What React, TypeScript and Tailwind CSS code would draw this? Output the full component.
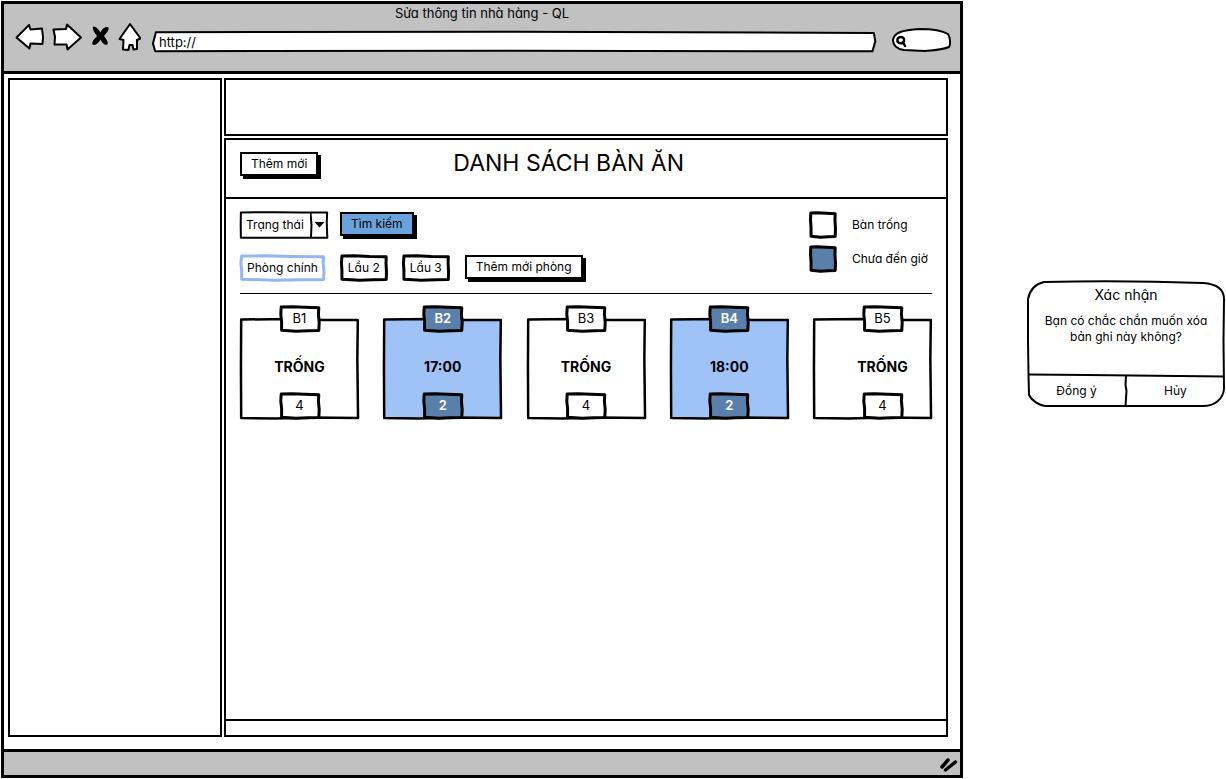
import type { ReactNode } from "react";
import clsx from "clsx";

type Table = { name: string; label: string; seats: number; reserved: boolean };

const tables: Table[] = [
  { name: "B1", label: "TRỐNG", seats: 4, reserved: false },
  { name: "B2", label: "17:00", seats: 2, reserved: true },
  { name: "B3", label: "TRỐNG", seats: 4, reserved: false },
  { name: "B4", label: "18:00", seats: 2, reserved: true },
  { name: "B5", label: "TRỐNG", seats: 4, reserved: false },
];

const wobbly =
  "M3 4 L30 3 L62 5 L97 7 L96 30 L98 64 L97 94 L70 95 L40 97 L4 93 L4 60 L2 32 Z";
const wobblyWide =
  "M2 4 L30 3 L62 6 L98.500 7 L98 30 L99 64 L98.500 94 L70 95 L40 97 L2 93 L2 60 L1 32 Z";
const straight = "M1 1.500 L40 1 L70 2 L99 2 L98.600 40 L99.200 99 L60 98.600 L30 99.400 L1 99 L0.800 50 Z";

/* Hand-drawn outline that stretches with the box it sits in. */
function Sketch({ d, className }: { d: string; className: string }) {
  return (
    <svg
      className={clsx("absolute inset-0 h-full w-full overflow-visible", className)}
      viewBox="0 0 100 100"
      preserveAspectRatio="none"
      aria-hidden="true"
    >
      <path d={d} vectorEffect="non-scaling-stroke" strokeLinejoin="round" />
    </svg>
  );
}

function Badge({ dark, children }: { dark: boolean; children: ReactNode }) {
  return (
    <span
      className={clsx(
        "relative flex h-[26px] w-10 items-center justify-center text-[13px]",
        dark ? "font-semibold text-white" : "text-black",
      )}
    >
      <Sketch
        d={wobbly}
        className={clsx("stroke-black stroke-[3px]", dark ? "fill-[#5b7fab]" : "fill-white")}
      />
      <span className="relative">{children}</span>
    </span>
  );
}

function TableCard({ table }: { table: Table }) {
  return (
    <li className="relative flex h-[101px] w-[119px] flex-col items-center justify-between last:pl-5">
      <Sketch
        d={straight}
        className={clsx("stroke-black stroke-[2.5px]", table.reserved ? "fill-[#9fc3f7]" : "fill-white")}
      />
      <div className="-mt-3">
        <Badge dark={table.reserved}>{table.name}</Badge>
      </div>
      <strong className="relative mt-2 text-sm leading-4 font-bold">{table.label}</strong>
      <Badge dark={table.reserved}>{table.seats}</Badge>
    </li>
  );
}

function RaisedButton({ blue, children }: { blue?: boolean; children: ReactNode }) {
  return (
    <button
      type="button"
      className={clsx(
        "mr-1 h-6 border-2 border-black px-[9px] leading-5 whitespace-nowrap shadow-[3px_3px_0_#000]",
        blue ? "bg-[#6aa3dc]" : "bg-white",
      )}
    >
      {children}
    </button>
  );
}

function RoomButton({ active, children }: { active?: boolean; children: ReactNode }) {
  return (
    <button type="button" className="relative h-[26px] px-[7px] whitespace-nowrap">
      <Sketch
        d={wobblyWide}
        className={clsx("fill-white stroke-[3px]", active ? "stroke-[#93b8f0]" : "stroke-black")}
      />
      <span className="relative">{children}</span>
    </button>
  );
}

function LegendItem({ blue, children }: { blue?: boolean; children: ReactNode }) {
  return (
    <li className="flex items-center gap-4">
      <span className="relative h-[26px] w-[26px]">
        <Sketch
          d={wobbly}
          className={clsx("stroke-black stroke-[3px]", blue ? "fill-[#5b7fab]" : "fill-white")}
        />
      </span>
      <span className="w-20 whitespace-nowrap">{children}</span>
    </li>
  );
}

function NavIcon({ label, width, children }: { label: string; width: number; children: ReactNode }) {
  return (
    <button type="button" aria-label={label}>
      <svg
        width={width}
        height="30"
        viewBox={`0 0 ${width} 30`}
        className="block fill-white stroke-black stroke-2"
        strokeLinejoin="round"
        strokeLinecap="round"
      >
        {children}
      </svg>
    </button>
  );
}

function BrowserBar() {
  return (
    <header className="flex h-[70px] flex-col border-b-[3px] border-black bg-[#c1c1c1]">
      <h1 className="text-center text-[13px] leading-[18px]">Sửa thông tin nhà hàng - QL</h1>
      <div className="flex items-end pr-[9px] pl-[11px]">
        <div className="flex items-center gap-[7px]">
          <NavIcon label="Back" width={30}>
            <path d="M1.500 15.500 L14 3 L15.500 7.500 L27 6.500 L28 15 L27.500 22 L15.500 21.500 L14.500 26.500 Z" />
          </NavIcon>
          <NavIcon label="Forward" width={30}>
            <path d="M1.500 7.500 L14 7 L15 2.500 L29 15.500 L15.500 27.500 L14.500 22.500 L2.500 22.500 L3 15 Z" />
          </NavIcon>
          <NavIcon label="Stop" width={21}>
            <path
              className="fill-black stroke-none"
              d="M4 4.500 C7 4 10 8 11.500 10.500 C13 7 16.500 4 19.500 5.500 C20 8.500 17.500 11 15 14 C17 17 19.500 19.500 18.500 22.500 C15.500 24 13 20.500 11.500 17.500 C9.500 21 6.500 24 3.500 22.500 C2.500 19 6 16.500 8 14 C6 11 3 7.500 4 4.500 Z"
            />
          </NavIcon>
          <NavIcon label="Home" width={24}>
            <path d="M13 2 L23.500 16.500 L20 18 L20 27 L16.500 27.500 L15.500 23 L12.500 23 L11.500 28 L6 27.500 L6.500 18 L2.500 17 Z" />
          </NavIcon>
        </div>
        <div className="relative ml-3 h-[21px] flex-1">
          <Sketch
            d="M0.400 6 L50 3 L99.700 9 L99.900 50 L99.500 97 L50 94 L0.300 96 L0 60 Z"
            className="fill-white stroke-black stroke-2"
          />
          <input
            aria-label="Address"
            defaultValue="http://"
            className="relative block h-full w-full bg-transparent px-1.5 text-[13px] outline-none"
          />
        </div>
        <div className="relative ml-4 flex h-6 w-[59px] items-center">
          <svg className="absolute inset-0" width="59" height="24" viewBox="0 0 59 24" aria-hidden="true">
            <path
              className="fill-white stroke-black stroke-2"
              d="M1 12 C2 5 9 2 28 1 C43 1 51 3 56 6 C58 9 59 16 57 19 C50 22 43 22 33 23 L12 22 C5 21 1 18 1 12 Z"
            />
            <path
              className="fill-none stroke-black stroke-[2.5px]"
              strokeLinecap="round"
              d="M9 9 C6 9 5 11 5.500 13.500 C7 16 11 16 12 13 C12.500 10.500 11 9 9 9 Z M11 14 L13 18"
            />
          </svg>
          <input aria-label="Search" className="relative ml-4 w-9 bg-transparent outline-none" />
        </div>
      </div>
    </header>
  );
}

function ConfirmDialog() {
  return (
    <section
      role="dialog"
      aria-labelledby="confirm-title"
      className="relative mt-[280px] mr-px ml-16 flex h-[126px] w-[198px] shrink-0 flex-col self-start text-center"
    >
      <svg
        className="absolute inset-0 h-full w-full overflow-visible fill-white stroke-black stroke-2"
        viewBox="0 0 198 126"
        aria-hidden="true"
      >
        <path d="M17 1 C60 0 120 0 176 2 C190 3 197 8 197 18 L196.500 60 L197 108 C196 118 188 125 176 125 L18 125 C12 124 5 120 2 114 L1.500 94 L1 60 L1 18 C3 8 8 3 17 1 Z" />
        <path d="M1 93.500 L60 94 L197 95.500 M99 95 L98.500 104 L99.500 110 L98.500 125" />
      </svg>
      <h2 id="confirm-title" className="relative mt-1 text-sm leading-5">
        Xác nhận
      </h2>
      <p className="relative mt-2 leading-4">
        Bạn có chắc chắn muốn xóa
        <br />
        bản ghi này không?
      </p>
      <div className="relative mt-auto grid h-8 grid-cols-2">
        <button type="button">Đồng ý</button>
        <button type="button">Hủy</button>
      </div>
    </section>
  );
}

export default function App() {
  return (
    <div className="flex min-h-screen bg-white py-px pl-px font-['Inter',sans-serif] text-xs text-black [font-feature-settings:'cv11']">
      <div className="flex min-w-0 flex-1 flex-col border-[3px] border-black">
        <BrowserBar />

        <div className="flex flex-1 gap-0.5 pt-1 pr-3 pb-3 pl-1">
          <aside className="w-[214px] shrink-0 border-2 border-black" />

          <main className="flex min-w-0 flex-1 flex-col gap-0.5">
            <div className="h-[58px] border-2 border-black" />

            <div className="flex flex-1 flex-col border-2 border-black">
              <div className="flex h-[59px] items-start border-b-2 border-black px-[14px] pt-3">
                <RaisedButton>Thêm mới</RaisedButton>
                <h2 className="ml-[131px] text-[23px] leading-[22px] whitespace-nowrap">DANH SÁCH BÀN ĂN</h2>
              </div>

              <div className="flex flex-1 flex-col px-[14px] pt-[13px]">
                <div className="flex items-start justify-between border-b border-black pb-3">
                  <div className="flex flex-col gap-[17px]">
                    <div className="flex h-[26px] items-start gap-3">
                      <div className="relative h-[26px] w-[88px]">
                        <Sketch d={straight} className="fill-white stroke-black stroke-2" />
                        <select
                          aria-label="Trạng thái"
                          className="relative h-full w-full appearance-none bg-transparent pl-1.5 outline-none"
                        >
                          <option>Trạng thái</option>
                        </select>
                        <svg
                          className="pointer-events-none absolute top-0 right-0"
                          width="18"
                          height="26"
                          viewBox="0 0 18 26"
                          aria-hidden="true"
                        >
                          <path className="fill-none stroke-black stroke-2" d="M0.500 1 L1.500 13 L1 25" />
                          <path d="M4.500 10 L14.500 10 L9.500 15.500 Z" />
                        </svg>
                      </div>
                      <RaisedButton blue>Tìm kiếm</RaisedButton>
                    </div>
                    <div className="flex items-start gap-4">
                      <RoomButton active>Phòng chính</RoomButton>
                      <RoomButton>Lầu 2</RoomButton>
                      <RoomButton>Lầu 3</RoomButton>
                      <RaisedButton>Thêm mới phòng</RaisedButton>
                    </div>
                  </div>
                  <ul className="flex flex-col gap-2">
                    <LegendItem>Bàn trống</LegendItem>
                    <LegendItem blue>Chưa đến giờ</LegendItem>
                  </ul>
                </div>

                <ul className="mt-6 flex justify-between">
                  {tables.map((table) => (
                    <TableCard key={table.name} table={table} />
                  ))}
                </ul>
              </div>

              <div className="h-4 border-t-2 border-black" />
            </div>
          </main>
        </div>

        <footer className="flex h-[26px] items-center justify-end border-t-[3px] border-black bg-[#c1c1c1] pr-0.5">
          <svg width="18" height="16" viewBox="0 0 18 16" aria-hidden="true">
            <path
              className="fill-none stroke-black stroke-[3.5px]"
              strokeLinecap="round"
              d="M2 11 L8 4 M5.500 14 L15.500 6"
            />
          </svg>
        </footer>
      </div>

      <ConfirmDialog />
    </div>
  );
}
